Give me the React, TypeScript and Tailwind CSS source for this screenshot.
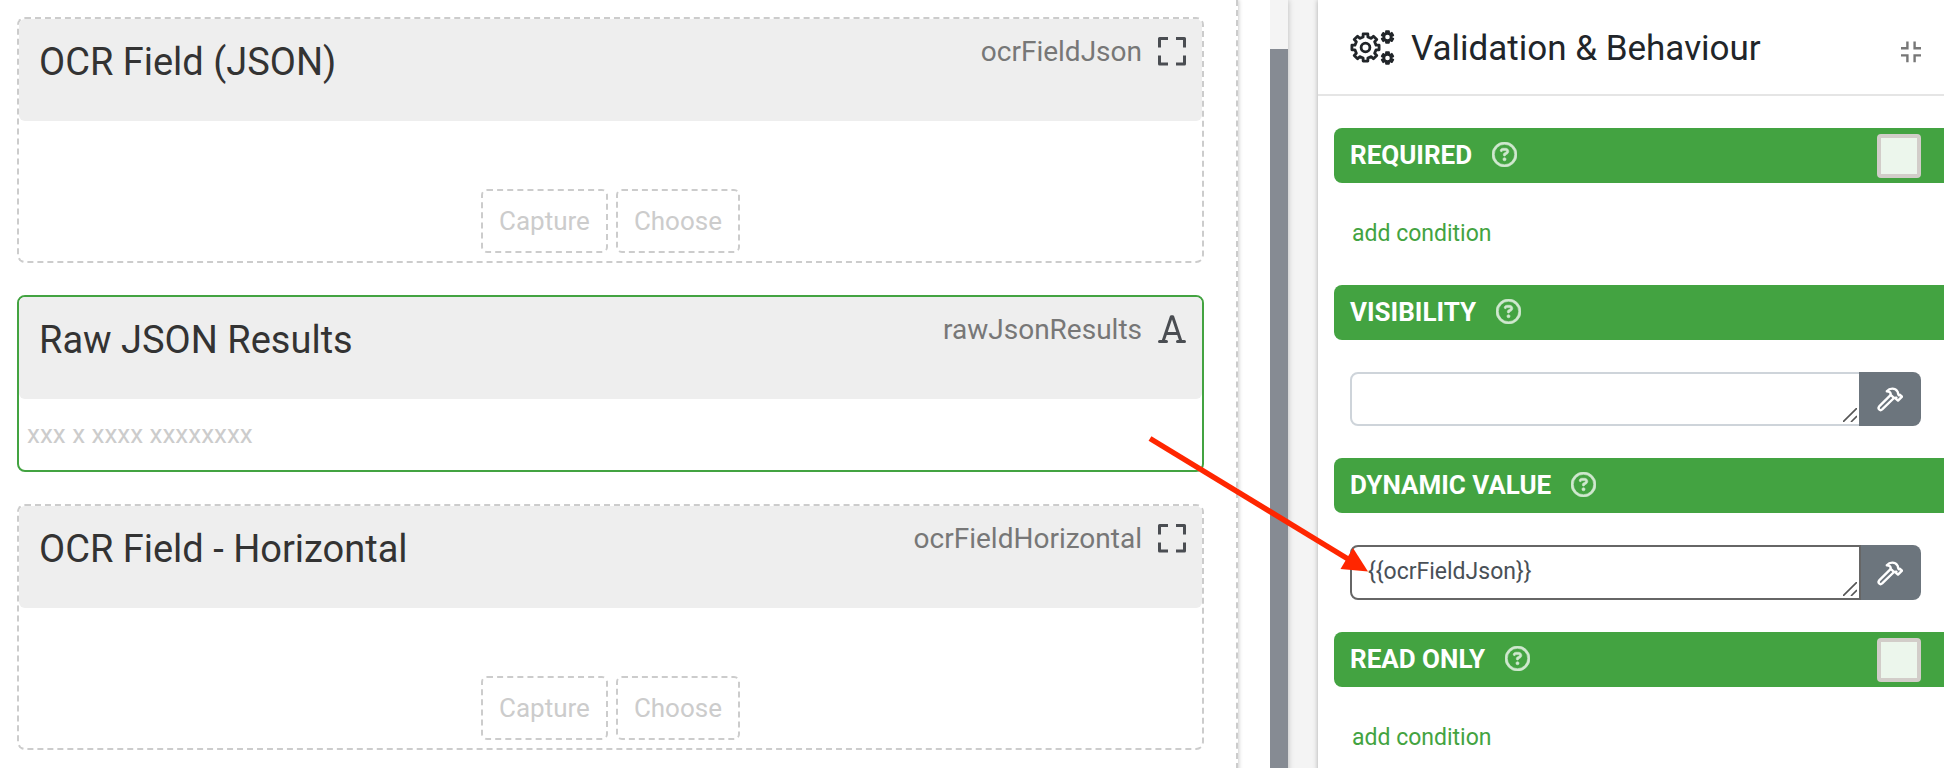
import { ReactNode } from 'react'
import { FaRegCircleQuestion } from 'react-icons/fa6'

type FieldKind = 'ocr' | 'text'

interface Field {
  label: string
  name: string
  kind: FieldKind
  selected?: boolean
}

const FIELDS: Field[] = [
  { label: 'OCR Field (JSON)', name: 'ocrFieldJson', kind: 'ocr' },
  { label: 'Raw JSON Results', name: 'rawJsonResults', kind: 'text', selected: true },
  { label: 'OCR Field - Horizontal', name: 'ocrFieldHorizontal', kind: 'ocr' },
]

/* ── Icons ── */

function gearPath(cx: number, cy: number, teeth: number, outer: number, inner: number) {
  const step = (Math.PI * 2) / teeth
  const points: string[] = []
  for (let i = 0; i < teeth; i++) {
    const a = i * step - Math.PI / 2
    const corners = [[-0.28, inner], [-0.22, outer], [0.22, outer], [0.28, inner]]
    corners.forEach(([t, r]) => {
      points.push(`${(cx + r * Math.cos(a + t * step)).toFixed(2)} ${(cy + r * Math.sin(a + t * step)).toFixed(2)}`)
    })
  }
  return `M${points.join('L')}Z`
}

function GearsIcon() {
  return (
    <svg width="46" height="36" viewBox="0 0 46 36" fill="none" stroke="currentColor" strokeLinejoin="round" aria-hidden="true">
      <path d={gearPath(15.5, 17.5, 8, 13.8, 10.8)} strokeWidth="2.8" />
      <circle cx="15.5" cy="17.5" r="4.4" strokeWidth="2.8" />
      <path d={gearPath(37.5, 7, 6, 5.8, 4)} strokeWidth="2.2" />
      <circle cx="37.5" cy="7" r="3.6" strokeWidth="2.6" />
      <path d={gearPath(37.5, 28, 6, 5.8, 4)} strokeWidth="2.2" />
      <circle cx="37.5" cy="28" r="3.6" strokeWidth="2.6" />
    </svg>
  )
}

function ScanIcon() {
  return (
    <svg width="30" height="30" viewBox="0 0 30 30" fill="none" stroke="currentColor" strokeWidth="3" strokeLinejoin="round" aria-hidden="true">
      <path d="M2.5 10.5V1.500h8.500M19 1.500h8.500v9M27.500 18.500v8.500H19M11 27H2.500v-8.500" />
    </svg>
  )
}

function TextIcon() {
  return (
    <svg width="30" height="30" viewBox="0 0 30 30" fill="none" stroke="currentColor" strokeWidth="3" strokeLinecap="round" strokeLinejoin="round" aria-hidden="true">
      <path d="M2.500 26.500h7M20.500 26.500h7M6 26.500 14.300 1.800h1.400L24 26.500M9 18.500h12" />
    </svg>
  )
}

function CollapseIcon() {
  return (
    <svg width="20" height="22" viewBox="0 0 20 22" fill="none" stroke="currentColor" strokeWidth="2.4" aria-hidden="true">
      <path d="M0 7.2h6.4V.5M20 7.2h-6.4V.5M0 14.4h6.4v6.8M20 14.4h-6.4v6.8" />
    </svg>
  )
}

function HammerIcon() {
  return (
    <svg width="26" height="26" viewBox="0 0 26 26" fill="none" stroke="currentColor" strokeWidth="2.4" strokeLinejoin="round" aria-hidden="true">
      <path d="M9.8 5.2C12.8 1.8 18 1.8 20.4 5.4 21.4 6.8 20.6 8.6 22 9.4L23 8.8 25 10.6 21 14.6 19 12.8 19.4 11.6 17 12 13.8 8.8C13.8 6.4 12.4 5.2 9.8 5.2Z" />
      <path d="M13.8 8.8 2.2 20.4C.4 22.6 3 25.4 5.2 23.4L17 12" />
    </svg>
  )
}

/* ── Form preview ── */

function PlaceholderButton({ children }: { children: ReactNode }) {
  return (
    <button className="h-16 px-4 border-2 border-dashed border-[#cccccc] rounded-md text-[26px] text-[#cccccc]">
      {children}
    </button>
  )
}

function FieldCard({ label, name, kind, selected }: Field) {
  return (
    <section className={`rounded-lg border-2 ${selected ? 'border-[#43a341]' : 'border-dashed border-[#cccccc]'}`}>
      <header className="h-[102px] pl-5 pr-[15px] flex items-start justify-between bg-[#eeeeee] rounded-md">
        <h2 className="pt-5 text-[38px] leading-[46px] text-[#333333]">{label}</h2>
        <div className="pt-[15px] flex items-center gap-[15px] text-[#4a4d52]">
          <span className="text-[28px] leading-9 text-[#777777]">{name}</span>
          {kind === 'ocr' ? <ScanIcon /> : <TextIcon />}
        </div>
      </header>
      {kind === 'ocr' ? (
        <div className="h-[140px] pb-2 flex items-end justify-center gap-2">
          <PlaceholderButton>Capture</PlaceholderButton>
          <PlaceholderButton>Choose</PlaceholderButton>
        </div>
      ) : (
        <p className="h-[71px] px-2 flex items-center text-[26px] text-[#cccccc]">xxx x xxxx xxxxxxxx</p>
      )}
    </section>
  )
}

/* ── Settings panel ── */

function SectionBar({ id, title, checkbox }: { id: string; title: string; checkbox?: boolean }) {
  return (
    <div className="h-[55px] pl-4 pr-[23px] flex items-center bg-[#43a341] rounded-l-lg text-white">
      <div className="pb-0.5 flex items-center gap-5">
        <label htmlFor={id} className="text-[26px] leading-8 font-bold">{title}</label>
        <button aria-label={`Help: ${title}`} className="opacity-75">
          <FaRegCircleQuestion size={25} strokeWidth={12} />
        </button>
      </div>
      {checkbox && (
        <input
          id={id}
          type="checkbox"
          className="ml-auto size-11 appearance-none rounded-sm border-4 border-[#d2cdc9] bg-[#ecf6ec] checked:bg-[#43a341]"
        />
      )}
    </div>
  )
}

function AddCondition() {
  return (
    <div className="h-[102px] px-[18px] flex items-center">
      <a href="#" className="text-[23px] leading-8 text-[#43a341]">add condition</a>
    </div>
  )
}

function ExpressionInput({ id, value, focused, children }: { id: string; value: string; focused?: boolean; children?: ReactNode }) {
  return (
    <div className={`relative my-8 ml-4 mr-[23px] flex ${focused ? 'h-[55px]' : 'h-[54px]'}`}>
      <div className={`relative flex-1 flex ${focused ? 'z-10' : ''}`}>
        <textarea
          id={id}
          defaultValue={value}
          rows={1}
          className={`w-full px-4 py-[9px] resize-none overflow-hidden rounded-l-lg border-2 bg-white text-[23px] leading-8 text-[#495057] outline-none ${
            focused ? 'border-[#666666]' : 'border-[#ced4da]'
          }`}
        />
        <svg className="absolute right-1 bottom-1 pointer-events-none" width="14" height="14" viewBox="0 0 14 14" stroke="#555555" strokeWidth="1.6" aria-hidden="true">
          <path d="M0 14 14 0M8 14l6-6" />
        </svg>
      </div>
      <button aria-label="Open expression builder" className="w-[62px] -ml-0.5 relative flex items-center justify-center rounded-r-lg bg-[#6c757d] text-white">
        <HammerIcon />
      </button>
      {children}
    </div>
  )
}

// Points from the selected field to its dynamic value
function Arrow() {
  return (
    <svg className="absolute -left-[202px] -top-[109px] z-20 pointer-events-none" width="224" height="140" viewBox="0 0 224 140" fill="#ff2600" aria-hidden="true">
      <path d="M2 2.5 200 123" stroke="#ff2600" strokeWidth="5.500" />
      <path d="M205 112 220 135.5 192.5 133Z" />
    </svg>
  )
}

export default function App() {
  return (
    <div className="min-h-screen flex bg-[#f4f4f4] font-[Roboto,sans-serif] overflow-hidden">
      <main className="flex-1 min-w-0 flex bg-white shadow-[0_0_6px_rgba(0,0,0,0.25)]">
        <div className="flex-1 py-[17px] pl-[17px] pr-8 flex flex-col gap-8 border-r-2 border-dashed border-[#cccccc] shadow-[1px_0_4px_rgba(0,0,0,0.2)]">
          {FIELDS.map((field) => (
            <FieldCard key={field.name} {...field} />
          ))}
        </div>
        {/* scroll track */}
        <div className="ml-8 w-[18px] pt-[49px] flex bg-[#f4f4f4]">
          <div className="flex-1 bg-[#868b93]" />
        </div>
      </main>

      <aside className="ml-[30px] w-[626px] shrink-0 bg-white shadow-[0_0_5px_rgba(0,0,0,0.3)]">
        <header className="h-24 pt-0.5 pl-8 pr-[23px] flex items-center border-b-2 border-[#e5e5e5] text-[#212529]">
          <GearsIcon />
          <h1 className="ml-[15px] pt-0.5 text-[35px] leading-[44px]">Validation &amp; Behaviour</h1>
          <button aria-label="Collapse panel" className="ml-auto pt-2 text-[#777777]">
            <CollapseIcon />
          </button>
        </header>
        <div className="pt-8 pl-4">
          <SectionBar id="required" title="REQUIRED" checkbox />
          <AddCondition />
          <SectionBar id="visibility" title="VISIBILITY" />
          <ExpressionInput id="visibility" value="" />
          <SectionBar id="dynamic-value" title="DYNAMIC VALUE" />
          <ExpressionInput id="dynamic-value" value="{{ocrFieldJson}}" focused>
            <Arrow />
          </ExpressionInput>
          <SectionBar id="read-only" title="READ ONLY" checkbox />
          <AddCondition />
        </div>
      </aside>
    </div>
  )
}
